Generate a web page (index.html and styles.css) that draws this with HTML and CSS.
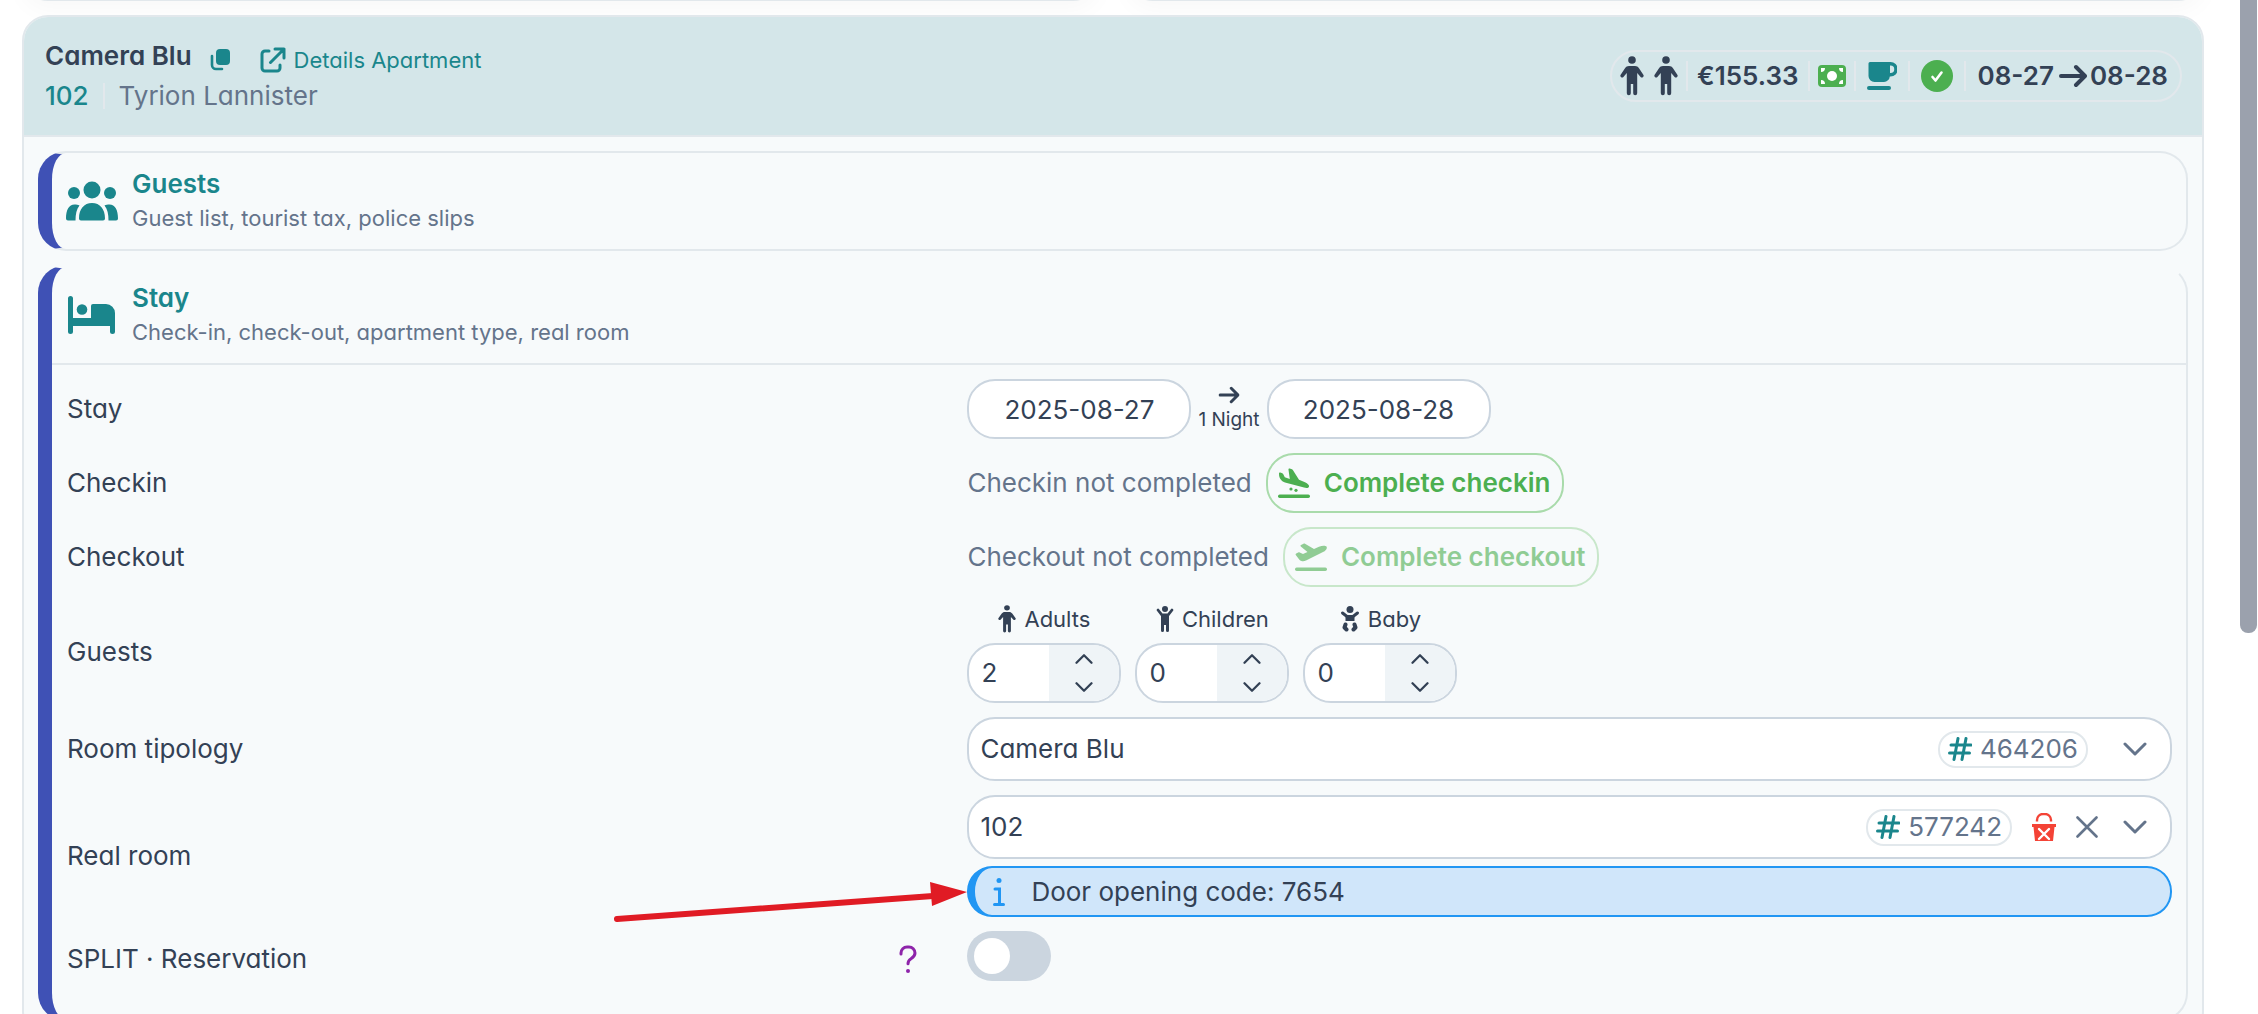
FILE: index.html
```html
<!DOCTYPE html>
<html lang="en">
<head>
  <title>Reservation</title>
  <meta charset="UTF-8">
  <link rel="stylesheet" href="styles.css">
</head>
<body>
  <!-- shared icons -->
  <svg class="sprite" aria-hidden="true">
    <symbol id="i-adult" viewBox="0 0 24 40">
      <circle cx="12" cy="4" r="3.800"/>
      <path d="M9 10h6c1.800 0 3 .8 4 2.200l4.500 6.800a1.800 1.800 0 0 1-2.900 2L17.200 17v20.200a2 2 0 0 1-4 0V28h-2.400v9.200a2 2 0 0 1-4 0V17l-3.400 4a1.800 1.800 0 0 1-2.900-2L5 12.200C6 10.800 7.200 10 9 10z"/>
    </symbol>
    <symbol id="i-chevron" viewBox="0 0 24 14">
      <path d="M2 2l10 10L22 2" fill="none" stroke="currentColor" stroke-width="3" stroke-linecap="round" stroke-linejoin="round"/>
    </symbol>
    <symbol id="i-arrow" viewBox="0 0 28 24">
      <path d="M2 12h23M17 3l9 9-9 9" fill="none" stroke="currentColor" stroke-width="4" stroke-linecap="round" stroke-linejoin="round"/>
    </symbol>
    <symbol id="i-hash" viewBox="0 0 24 24">
      <path d="M10 1.500L6 22.500M18 1.500l-4 21M3 8h20M1.500 16h20" fill="none" stroke="currentColor" stroke-width="3" stroke-linecap="round"/>
    </symbol>
  </svg>

  <div class="prev-cards">
    <div class="prev-card"></div>
    <div class="prev-card"></div>
  </div>

  <main class="room-card">
    <header class="room-header">
      <div>
        <div class="room-title">
          <h1>Camera Blu</h1>
          <button class="icon-btn copy-btn" type="button" aria-label="Copy">
            <svg width="20" height="22" viewBox="0 0 20 22"><rect x="6" y="0" width="14" height="16" rx="4"/><path d="M2 7v9a4 4 0 0 0 4 4h6" fill="none" stroke="currentColor" stroke-width="2.600" stroke-linecap="round"/></svg>
          </button>
          <a class="details-link" href="#apartment">
            <svg width="26" height="26" viewBox="0 0 26 26"><path d="M9 4H5a3 3 0 0 0-3 3v14a3 3 0 0 0 3 3h12a3 3 0 0 0 3-3v-3M15 2h9v9M24 2L10.500 15.500" fill="none" stroke="currentColor" stroke-width="3" stroke-linecap="round" stroke-linejoin="round"/></svg>
            Details Apartment
          </a>
        </div>
        <div class="room-sub">
          <span class="room-number">102</span>
          <span class="divider"></span>
          <span class="guest-name">Tyrion Lannister</span>
        </div>
      </div>
      <div class="summary">
        <span class="people">
          <svg width="24" height="40"><use href="#i-adult"/></svg>
          <svg width="24" height="40"><use href="#i-adult"/></svg>
        </span>
        <span class="price">€155.33</span>
        <span class="cell cell-money"><svg width="28" height="22" viewBox="0 0 28 22"><rect width="28" height="22" rx="4"/><circle cx="14" cy="11" r="5" fill="#fff"/><path d="M3 7V3h4a4 4 0 0 1-4 4zM25 7V3h-4a4 4 0 0 0 4 4zM3 15v4h4a4 4 0 0 0-4-4zM25 15v4h-4a4 4 0 0 1 4-4z" fill="#fff"/></svg></span>
        <span class="cell cell-cup"><svg width="30" height="28" viewBox="0 0 30 28"><path d="M3 0h20.500a6.500 6.500 0 0 1 0 14.500h-.7A6 6 0 0 1 17 20H7.500A6 6 0 0 1 1.500 14V1.500A1.500 1.500 0 0 1 3 0zm20 3.500v7.500h.5a3.700 3.700 0 0 0 0-7.500z" fill-rule="evenodd"/><rect x="0" y="24" width="24" height="4" rx="2"/></svg></span>
        <span class="cell cell-check"><svg width="32" height="32" viewBox="0 0 32 32"><circle cx="16" cy="16" r="16"/><path d="M11.500 17l3 3.500 6-8" fill="none" stroke="#fff" stroke-width="2.600" stroke-linecap="round" stroke-linejoin="round"/></svg></span>
        <span class="dates">08-27<svg width="28" height="24"><use href="#i-arrow"/></svg>08-28</span>
      </div>
    </header>

    <div class="room-body">
      <section class="panel">
        <div class="panel-header">
          <svg width="52" height="40" viewBox="0 0 52 40"><circle cx="26" cy="9" r="8.500"/><circle cx="8" cy="12" r="6"/><circle cx="44" cy="12" r="6"/><path d="M13 37.500C13 28 18 22 26 22s13 6 13 15.500a2 2 0 0 1-2 2H15a2 2 0 0 1-2-2zM0 37.500C0 29 3 23.500 8.500 23.500c2 0 3.500.3 5 1C10.500 28 9.500 33 9.500 39.500H2a2 2 0 0 1-2-2zM52 37.500c0-8.500-3-14-8.500-14-2 0-3.500.3-5 1 3 3.500 4 8.500 4 15H50a2 2 0 0 0 2-2z"/></svg>
          <div>
            <h2>Guests</h2>
            <p>Guest list, tourist tax, police slips</p>
          </div>
        </div>
      </section>

      <section class="panel panel-open">
        <div class="panel-header">
          <svg width="52" height="38" viewBox="0 0 52 38"><path d="M4.500 0A2.500 2.500 0 0 1 7 2.500V22h18V10a2 2 0 0 1 2-2h13a9 9 0 0 1 9 9v18.500a2.500 2.500 0 0 1-5 0V30H7v5.500a2.500 2.500 0 0 1-5 0v-33A2.500 2.500 0 0 1 4.500 0z"/><circle cx="16" cy="13.500" r="5.300"/></svg>
          <div>
            <h2>Stay</h2>
            <p>Check-in, check-out, apartment type, real room</p>
          </div>
        </div>

        <form class="panel-form">
          <div class="row">
            <label for="date-from">Stay</label>
            <div class="field stay-field">
              <input class="date" type="text" id="date-from" value="2025-08-27">
              <span class="nights"><svg width="22" height="18" viewBox="0 0 28 24"><use href="#i-arrow"/></svg>1 Night</span>
              <input class="date" type="text" aria-label="Check-out date" value="2025-08-28">
            </div>
          </div>

          <div class="row">
            <span class="label">Checkin</span>
            <div class="field">
              <span class="status">Checkin not completed</span>
              <button class="action" type="button">
                <svg width="32" height="30" viewBox="0 0 32 30"><path d="M1 5.500c0-.7.700-1.100 1.300-.9l2 .7c.5.200.8.500 1 1l1.500 3 5 1.600L10.500 1.700c-.2-.8.500-1.400 1.200-1.200l2.300.8c.5.200.8.500 1 .9l6 9.500 6 2.500c2.700 1.200 4.500 3 4 4.500-.5 1.300-2.500 1.600-5 .8L7 14.500c-1.500-.5-3-1.500-4-2.800C1.500 10 1 8.500 1 5.500z"/><circle cx="13" cy="21" r="1.600"/><circle cx="18" cy="22.300" r="1.600"/><rect x="0" y="26.500" width="32" height="3.500" rx="1.700"/></svg>
                Complete checkin
              </button>
            </div>
          </div>

          <div class="row">
            <span class="label">Checkout</span>
            <div class="field">
              <span class="status">Checkout not completed</span>
              <button class="action" type="button" disabled>
                <svg width="32" height="28" viewBox="0 0 32 28"><path d="M6 2l2.500-1.200c.5-.3 1-.3 1.500 0L19 6l5-2.200c3-1.300 6.500-1.500 7.500-.2 1 1.500-.5 4-3.500 5.500L11 17.500c-1.500.7-3 .9-4.500.5-1-.2-1.700-.6-2.300-1.400L.8 12c-.4-.5-.2-1.200.4-1.500l2-1c.5-.2 1-.2 1.500 0L8 11l4.500-2L5.800 3.500C5.300 3.100 5.400 2.300 6 2z"/><rect x="0" y="24.500" width="32" height="3.500" rx="1.700"/></svg>
                Complete checkout
              </button>
            </div>
          </div>

          <div class="row">
            <span class="label">Guests</span>
            <div class="field people-field">
              <div class="counter">
                <label for="adults"><svg width="18" height="28" viewBox="0 0 24 40" preserveAspectRatio="none"><use href="#i-adult" width="24" height="40"/></svg>Adults</label>
                <div class="spinner">
                  <input type="text" id="adults" value="2">
                  <div class="spin-btns">
                    <button class="up" type="button" aria-label="More adults"><svg width="18" height="12"><use href="#i-chevron"/></svg></button>
                    <button type="button" aria-label="Fewer adults"><svg width="18" height="12"><use href="#i-chevron"/></svg></button>
                  </div>
                </div>
              </div>
              <div class="counter">
                <label for="children"><svg width="18" height="26" viewBox="0 0 18 26"><circle cx="9" cy="3" r="3"/><path d="M2 4l4 5h6l4-5M6 9" fill="none" stroke="currentColor" stroke-width="2.800" stroke-linecap="round"/><path d="M5 8h8v16.500a1.500 1.500 0 0 1-3 0V19H8v5.500a1.500 1.500 0 0 1-3 0z"/></svg>Children</label>
                <div class="spinner">
                  <input type="text" id="children" value="0">
                  <div class="spin-btns">
                    <button class="up" type="button" aria-label="More children"><svg width="18" height="12"><use href="#i-chevron"/></svg></button>
                    <button type="button" aria-label="Fewer children"><svg width="18" height="12"><use href="#i-chevron"/></svg></button>
                  </div>
                </div>
              </div>
              <div class="counter">
                <label for="baby"><svg width="20" height="26" viewBox="0 0 20 26"><circle cx="10" cy="3.500" r="3.500"/><path d="M2.500 7L7 10.500h6L17.500 7" fill="none" stroke="currentColor" stroke-width="3" stroke-linecap="round"/><path d="M5.500 9h9v6h-9z"/><path d="M5.500 18.500l-1 3 2 2M14.500 18.500l1 3-2 2" fill="none" stroke="currentColor" stroke-width="4" stroke-linecap="round" stroke-linejoin="round"/></svg>Baby</label>
                <div class="spinner">
                  <input type="text" id="baby" value="0">
                  <div class="spin-btns">
                    <button class="up" type="button" aria-label="More babies"><svg width="18" height="12"><use href="#i-chevron"/></svg></button>
                    <button type="button" aria-label="Fewer babies"><svg width="18" height="12"><use href="#i-chevron"/></svg></button>
                  </div>
                </div>
              </div>
            </div>
          </div>

          <div class="row">
            <label for="tipology">Room tipology</label>
            <div class="field">
              <div class="dropdown">
                <select id="tipology"><option>Camera Blu</option></select>
                <div class="dropdown-tools">
                  <span class="tag tag-spaced"><svg width="24" height="24"><use href="#i-hash"/></svg>464206</span>
                  <svg class="caret" width="24" height="14"><use href="#i-chevron"/></svg>
                </div>
              </div>
            </div>
          </div>

          <div class="row">
            <label for="real-room">Real room</label>
            <div class="field stacked">
              <div class="dropdown">
                <select id="real-room"><option>102</option></select>
                <div class="dropdown-tools">
                  <span class="tag"><svg width="24" height="24"><use href="#i-hash"/></svg>577242</span>
                  <button class="icon-btn lock-btn" type="button" aria-label="Unlock room">
                    <svg width="24" height="28" viewBox="0 0 24 28"><path d="M5 8.500V7a6 6 0 0 1 6-6h2a6 6 0 0 1 6 6v1.500" fill="none" stroke="currentColor" stroke-width="2.400"/><path d="M0 11h24v3h-1.500L21 28H3L1.500 14H0z"/><path d="M7 16l10 10M17 16L7 26" stroke="#fff" stroke-width="2.400" stroke-linecap="round"/></svg>
                  </button>
                  <button class="icon-btn clear-btn" type="button" aria-label="Clear">
                    <svg width="22" height="22" viewBox="0 0 22 22"><path d="M1.500 1.500l19 19M20.500 1.500l-19 19" stroke="currentColor" stroke-width="2.600" stroke-linecap="round"/></svg>
                  </button>
                  <svg class="caret" width="24" height="14"><use href="#i-chevron"/></svg>
                </div>
              </div>
              <div class="notice">
                <svg width="12" height="28" viewBox="0 0 12 28"><circle cx="6" cy="2.500" r="2.500"/><path d="M2 11h4.500v15.500M1.500 26.500h9" fill="none" stroke="currentColor" stroke-width="3" stroke-linecap="round"/></svg>
                Door opening code: 7654
                <svg class="pointer" width="354" height="42" viewBox="0 0 354 42"><path d="M4 37L320 14" stroke="#e01b24" stroke-width="6" stroke-linecap="round"/><path d="M317 0l37 10-35 14z" fill="#e01b24"/></svg>
              </div>
            </div>
          </div>

          <div class="row row-split">
            <div class="label split-label">
              <label for="split">SPLIT · Reservation</label>
              <button class="icon-btn help-btn" type="button" aria-label="Help">
                <svg width="18" height="28" viewBox="0 0 18 28"><path d="M2 9V8a6 6 0 0 1 6-6h2a6 6 0 0 1 6 6c0 3-2 4.500-4 5.700-2 1.200-3 2.300-3 5" fill="none" stroke="currentColor" stroke-width="3" stroke-linecap="round"/><circle cx="9" cy="26" r="2"/></svg>
              </button>
            </div>
            <div class="field">
              <input class="toggle" type="checkbox" id="split">
            </div>
          </div>
        </form>
      </section>
    </div>
  </main>

  <div class="scroll-thumb"></div>
</body>
</html>
```
FILE: styles.css
```css
:root {
  --teal: #1a868c;
  --text: #334155;
  --muted: #64748b;
  --line: #e2e8ec;
  --input-line: #cbd5df;
  --surface: #f7fafb;
  --header-bg: #d4e6e9;
  --blue: #3f51b5;
  --green: #4caf50;
  --info: #2196f3;
  --info-bg: #d0e6fa;
}

* {
  box-sizing: border-box;
}

body {
  margin: 0;
  height: 100vh;
  overflow: hidden;
  padding: 0 54px 0 22px;
  font-family: Inter, "Liberation Sans", sans-serif;
  font-feature-settings: "cv11";
  font-size: 26px;
  line-height: 40px;
  color: var(--text);
  background-color: #fff;
}

h1, h2, p {
  margin: 0;
}

svg {
  display: block;
  flex: none;
  fill: currentColor;
}

input, button, select {
  font: inherit;
  font-feature-settings: inherit;
  color: inherit;
}

.sprite {
  position: absolute;
  width: 0;
  height: 0;
}

/* only the bottom edge of the previous cards is in view */
.prev-cards {
  display: flex;
  align-items: flex-end;
  gap: 28px;
  height: 15px;
  padding-bottom: 14px;
}

.prev-card {
  flex: 1;
  height: 80px;
  border: 2px solid var(--line);
  border-radius: 26px;
  background-color: #fff;
  box-shadow: 0 8px 24px rgba(0,0,0,0.03);
}

.room-card {
  position: relative;
  border: 2px solid var(--line);
  border-radius: 26px;
  background-color: var(--surface);
}

.room-header {
  display: flex;
  justify-content: space-between;
  align-items: center;
  height: 120px;
  padding: 0 20px 0 21px;
  border-bottom: 2px solid var(--line);
  border-radius: 24px 24px 0 0;
  background-color: var(--header-bg);
}

.room-title, .room-sub {
  display: flex;
  align-items: center;
}

.room-title h1 {
  font-size: 26px;
  font-weight: 600;
}

.icon-btn {
  padding: 0;
  border: none;
  background: none;
  cursor: pointer;
}

.copy-btn {
  margin: 8px 0 0 18px;
  color: var(--teal);
}

.details-link {
  display: flex;
  align-items: center;
  gap: 8px;
  margin: 8px 0 0 30px;
  font-size: 22px;
  line-height: 32px;
  color: var(--teal);
  text-decoration: none;
}

.room-number {
  font-weight: 500;
  color: var(--teal);
}

.divider {
  width: 2px;
  height: 26px;
  margin: 0 14px;
  background-color: var(--line);
}

.guest-name, .status {
  color: var(--muted);
}

.summary {
  display: flex;
  align-items: center;
  height: 52px;
  padding: 0 12px 0 8px;
  border: 2px solid var(--line);
  border-radius: 26px;
  font-weight: 600;
}

.people {
  display: flex;
  gap: 10px;
}

.price, .cell, .dates {
  display: flex;
  align-items: center;
  height: 30px;
  border-left: 2px solid var(--line);
}

.price {
  margin-left: 8px;
  padding: 0 9px;
}

.cell {
  justify-content: center;
}

.cell-money {
  width: 46px;
  color: var(--green);
}

.cell-cup {
  width: 54px;
  color: var(--teal);
}

.cell-check {
  width: 56px;
  color: var(--green);
}

.dates {
  padding-left: 12px;
}

.dates svg {
  margin: 0 3px 0 5px;
}

.room-body {
  display: flex;
  flex-direction: column;
  gap: 14px;
  padding: 14px;
}

.panel {
  border: 2px solid var(--line);
  border-left: 14px solid var(--blue);
  border-radius: 28px;
}

.panel-open {
  border-top-color: transparent;
}

.panel-header {
  display: flex;
  align-items: center;
  gap: 14px;
  height: 96px;
  padding: 0 14px;
}

.panel-open .panel-header {
  height: 98px;
  border-bottom: 2px solid var(--line);
}

.panel-header svg {
  color: var(--teal);
}

.panel-header h2 {
  font-size: 26px;
  line-height: 34px;
  font-weight: 600;
  color: var(--teal);
}

.panel-header p {
  font-size: 22px;
  line-height: 34px;
  color: var(--muted);
}

.panel-form {
  display: flex;
  flex-direction: column;
  gap: 14px;
  padding: 14px 14px 32px 15px;
}

.row {
  display: grid;
  grid-template-columns: minmax(0, 5fr) minmax(0, 7fr);
  column-gap: 40px;
  align-items: center;
}

.row-split {
  min-height: 56px;
}

.row-split .field {
  align-self: start;
}

.field {
  display: flex;
  align-items: center;
  gap: 14px;
}

.stay-field {
  gap: 7px;
}

.date {
  width: 224px;
  height: 60px;
  padding: 0;
  border: 2px solid var(--input-line);
  border-radius: 28px;
  text-align: center;
  background-color: #fff;
}

.nights {
  display: flex;
  flex-direction: column;
  align-items: center;
  gap: 4px;
  font-size: 19px;
  line-height: 24px;
}

.action {
  display: flex;
  align-items: center;
  gap: 14px;
  height: 60px;
  padding: 0 12px 0 10px;
  border: 2px solid #a9dbab;
  border-radius: 28px;
  font-weight: 600;
  color: var(--green);
  background: none;
  cursor: pointer;
}

.action:disabled {
  opacity: 0.6;
  cursor: default;
}

.counter label {
  display: flex;
  justify-content: center;
  align-items: center;
  gap: 8px;
  margin-bottom: 6px;
  font-size: 22px;
  line-height: 36px;
}

.spinner {
  display: flex;
  width: 154px;
  height: 60px;
  border: 2px solid var(--input-line);
  border-radius: 28px;
  overflow: hidden;
  background-color: #fff;
}

.spinner input {
  flex: 1;
  min-width: 0;
  padding: 0 0 0 12px;
  border: none;
  background: none;
}

.spin-btns {
  display: flex;
  flex-direction: column;
  width: 70px;
  background-color: #eff4f7;
}

.spin-btns button {
  flex: 1;
  display: flex;
  justify-content: center;
  align-items: center;
  padding: 0;
  border: none;
  background: none;
}

.spin-btns svg {
  stroke: currentColor;
}

.spin-btns .up svg {
  transform: rotate(180deg);
}

.stacked {
  flex-direction: column;
  align-items: stretch;
  gap: 7px;
}

.dropdown {
  position: relative;
  flex: 1;
}

.dropdown select {
  display: block;
  width: 100%;
  height: 64px;
  padding: 0 11px;
  border: 2px solid var(--input-line);
  border-radius: 28px;
  appearance: none;
  background-color: #fff;
}

/* tools lie over the select's right end */
.dropdown-tools {
  position: absolute;
  top: 0;
  right: 25px;
  height: 100%;
  display: flex;
  align-items: center;
  color: var(--muted);
}

.tag {
  display: flex;
  align-items: center;
  gap: 8px;
  height: 37px;
  padding: 0 8px;
  border: 2px solid var(--line);
  border-radius: 18px;
}

.tag svg {
  color: var(--teal);
}

.tag-spaced {
  margin-right: 10px;
}

.lock-btn {
  margin-left: 20px;
  color: #f44336;
}

.clear-btn {
  margin-left: 20px;
}

.caret {
  margin-left: 25px;
}

.notice {
  position: relative;
  display: flex;
  align-items: center;
  gap: 26px;
  height: 51px;
  padding-left: 18px;
  border: 2px solid var(--info);
  border-left-width: 8px;
  border-radius: 25px;
  background-color: var(--info-bg);
}

.notice svg {
  color: var(--info);
}

/* red pointer drawn over the form */
.notice .pointer {
  position: absolute;
  top: 14px;
  right: 100%;
  margin-right: 8px;
}

.split-label {
  display: flex;
  justify-content: space-between;
  align-items: center;
  padding-right: 10px;
}

.help-btn {
  color: #8e24aa;
}

.toggle {
  display: flex;
  align-items: center;
  appearance: none;
  width: 84px;
  height: 50px;
  margin: 0;
  padding: 0 7px;
  border-radius: 25px;
  background-color: var(--input-line);
  cursor: pointer;
}

.toggle:before {
  content: "";
  width: 36px;
  height: 36px;
  border-radius: 50%;
  background-color: #fff;
}

.toggle:checked {
  justify-content: flex-end;
  background-color: var(--teal);
}

.scroll-thumb {
  position: fixed;
  top: 0;
  right: 1px;
  width: 17px;
  height: 633px;
  border-radius: 0 0 8px 8px;
  background-color: #9ba1ad;
}
```
